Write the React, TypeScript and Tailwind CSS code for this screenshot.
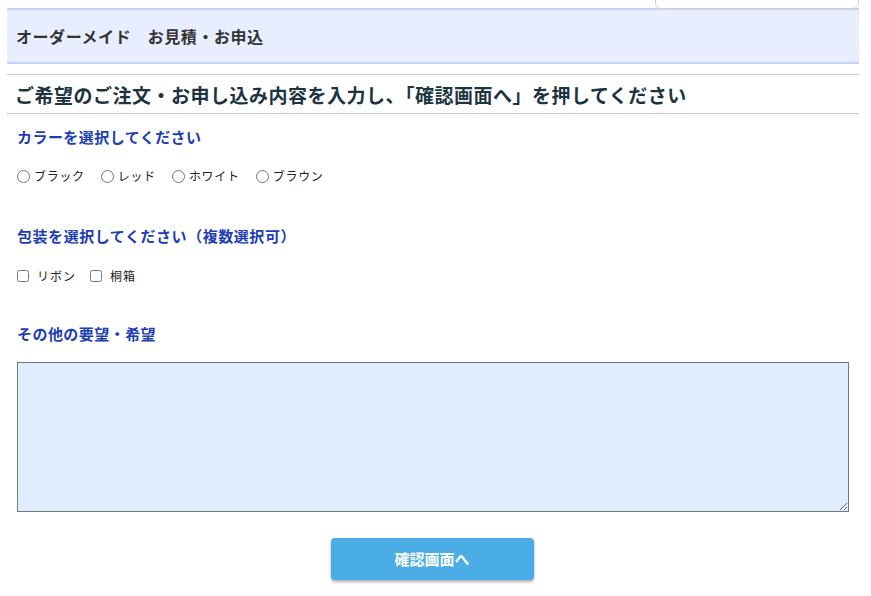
import React from "react";

export default function App() {
  const font = { fontFamily: '"Noto Sans CJK JP", "Noto Sans", sans-serif' };
  return (
    <div className="w-[871px] h-[596px] bg-white overflow-hidden relative" style={font}>
      <div className="absolute right-[12px] top-[-10px] w-[204px] h-[19px] bg-white border border-[#d0d0d0] rounded-b-[6px] z-10" />
      <div className="pt-[8px] pl-[7px] pr-[12px]">
        <div className="h-[56px] bg-[#e8eeff] border-t-2 border-b-2 border-[#c5d3fa] flex items-center pl-[9px]">
          <span className="text-[16px] font-bold text-[#333] leading-none tracking-[0.55px]">オーダーメイド　お見積・お申込</span>
        </div>
        <div className="mt-[10px] border-t border-b border-[#c8c8c8] h-[40px] flex items-center pl-[8px]">
          <span className="text-[19px] font-bold text-[#1c3440] leading-none tracking-[0.5px]">ご希望のご注文・お申し込み内容を入力し、「確認画面へ」を押してください</span>
        </div>
        <div className="pl-[10px] pr-[10px]">
          <div className="mt-[13px] text-[15px] font-bold text-[#1d3db5] leading-[20px] tracking-[0.45px]">カラーを選択してください</div>
          <div className="mt-[21px] flex items-center gap-[16px] text-[12px] text-[#222] leading-[16px]">
            {["ブラック", "レッド", "ホワイト", "ブラウン"].map((c) => (
              <label key={c} className="flex items-center gap-[4px] tracking-[0.7px]">
                <input type="radio" name="color" className="w-[13px] h-[13px] m-0" />
                <span>{c}</span>
              </label>
            ))}
          </div>
          <div className="mt-[42px] text-[15px] font-bold text-[#1d3db5] leading-[20px] tracking-[0.55px]">包装を選択してください（複数選択可）</div>
          <div className="mt-[22px] flex items-center gap-[14px] text-[12px] text-[#222] leading-[16px]">
            {["リボン", "桐箱"].map((c) => (
              <label key={c} className="flex items-center gap-[8px] tracking-[1px]">
                <input type="checkbox" className="w-[12px] h-[12px] m-0" />
                <span>{c}</span>
              </label>
            ))}
          </div>
          <div className="mt-[40px] text-[15px] font-bold text-[#1d3db5] leading-[20px] tracking-[0.45px]">その他の要望・希望</div>
          <textarea className="mt-[18px] block w-[832px] h-[150px] bg-[#e0edff] border border-[#767676] outline-none resize" />
          <div className="mt-[26px] flex justify-center pr-[2px]">
            <button className="w-[203px] h-[42px] bg-[#4aade6] rounded-[4px] text-white text-[15px] font-bold shadow-[0_2px_3px_rgba(0,0,0,0.3)]">確認画面へ</button>
          </div>
        </div>
      </div>
    </div>
  );
}
